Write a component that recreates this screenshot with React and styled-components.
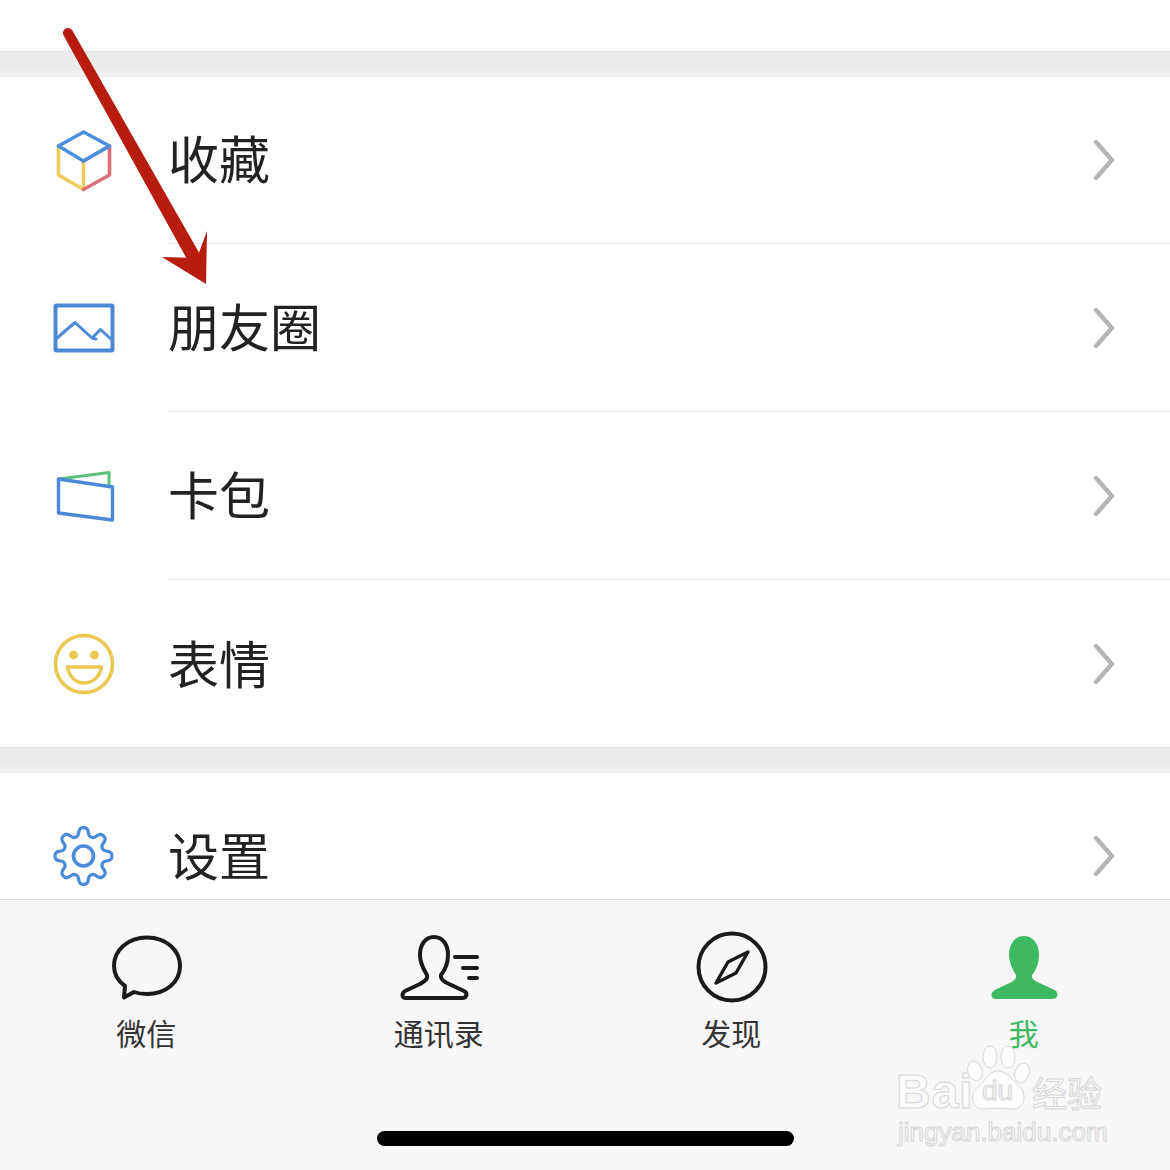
import React from "react";
import styled, { createGlobalStyle } from "styled-components";

const GlobalStyle = createGlobalStyle`
  html, body {
    margin: 0;
    padding: 0;
    background: #fff;
  }
  * {
    box-sizing: border-box;
  }
`;

const Page = styled.div`
  position: relative;
  width: 1170px;
  height: 1170px;
  display: flex;
  flex-direction: column;
  overflow: hidden;
  background: #fff;
  font-family: "Noto Sans CJK SC", "Liberation Sans", sans-serif;
`;

const Scroller = styled.div`
  flex: 1;
  min-height: 0;
  overflow: hidden;
  padding-top: 51px;
`;

const Gap = styled.div`
  height: 26px;
  margin-top: ${({ $pull }) => ($pull ? "-1px" : "0")};
  margin-bottom: -1px;
  background: linear-gradient(#ececec 0 78%, #f1f1f1 78%);
  border-top: 1px solid #dedede;
`;

const Row = styled.div`
  height: 168px;
  display: flex;
  align-items: center;
  padding-left: 52px;
`;

const RowIcon = styled.svg`
  width: 64px;
  height: 64px;
  flex: none;
  margin-right: 52px;
  fill: none;
  stroke-width: 3.6;
  stroke-linecap: round;
  stroke-linejoin: round;
`;

const RowBody = styled.div`
  flex: 1;
  height: 100%;
  display: flex;
  align-items: center;
  justify-content: space-between;
  padding-right: 54px;
  border-bottom: ${({ $last }) => ($last ? "none" : "1px solid #e8e8e8")};
`;

const RowLabel = styled.span`
  font-size: 51px;
  line-height: 1;
  color: #222;
  margin-top: -4px;
`;

const Chevron = styled.svg`
  width: 24px;
  height: 40px;
  fill: none;
  stroke: #b3b3b3;
  stroke-width: 4.4;
  stroke-linecap: round;
  stroke-linejoin: round;
`;

const TabBar = styled.div`
  height: 271px;
  flex: none;
  display: flex;
  flex-direction: column;
  align-items: center;
  background: #f7f7f7;
  border-top: 1px solid #dcdcdc;
`;

const Tabs = styled.div`
  width: 100%;
  display: grid;
  grid-template-columns: repeat(4, 1fr);
  padding-top: 30px;
`;

const Tab = styled.div`
  display: flex;
  flex-direction: column;
  align-items: center;
  color: ${({ $active }) => ($active ? "#3fb862" : "#333")};
`;

const TabIcon = styled.svg`
  width: 84px;
  height: 76px;
  fill: none;
  stroke: #1a1a1a;
  stroke-width: 4;
  stroke-linecap: round;
  stroke-linejoin: round;
`;

const TabLabel = styled.span`
  font-size: 30px;
  line-height: 36px;
  margin-top: 8px;
`;

const HomeBar = styled.div`
  width: 417px;
  height: 15px;
  margin-top: 81px;
  border-radius: 8px;
  background: #000;
`;

const ArrowLayer = styled.svg`
  position: absolute;
  left: 0;
  top: 0;
  width: 1170px;
  height: 320px;
  pointer-events: none;
`;

const Watermark = styled.div`
  position: absolute;
  left: 896px;
  top: 1043px;
  width: 214px;
  display: flex;
  flex-direction: column;
  color: #fbfbfb;
  -webkit-text-stroke: 1px #d6d6d6;
`;

const MarkTop = styled.div`
  height: 70px;
  display: flex;
  align-items: flex-end;
`;

const MarkBai = styled.span`
  font-family: "Liberation Sans", sans-serif;
  font-weight: 700;
  font-size: 48px;
  line-height: 56px;
  letter-spacing: 1px;
  width: 72px;
  margin-bottom: -7px;
`;

const Paw = styled.div`
  position: relative;
  width: 64px;
  height: 70px;
  flex: none;
  margin-left: -2px;
  margin-right: 2px;
`;

const PawShape = styled.svg`
  width: 64px;
  height: 70px;
  fill: #fdfdfd;
  stroke: #d8d8d8;
  stroke-width: 1;
`;

const PawText = styled.span`
  position: absolute;
  left: 16px;
  bottom: 6px;
  font-family: "Liberation Sans", sans-serif;
  font-size: 28px;
  line-height: 32px;
  color: #f4f4f4;
`;

const MarkCn = styled.span`
  font-size: 35px;
  line-height: 46px;
  white-space: nowrap;
  margin-bottom: -2px;
`;

const MarkUrl = styled.span`
  font-family: "Liberation Sans", sans-serif;
  font-size: 26px;
  line-height: 30px;
  margin-top: 4px;
  margin-left: 2px;
  white-space: nowrap;
`;

// wavy gear outline, lobes flattened a little so they read as teeth
const gearPath = () => {
  const cx = 83.5;
  const cy = 856;
  const pts = [];
  for (let i = 0; i < 200; i++) {
    const a = (i / 200) * Math.PI * 2;
    const wave = Math.tanh(1.6 * Math.cos(8 * (a + Math.PI / 2))) / Math.tanh(1.6);
    const r = 24.4 + 4 * wave;
    pts.push(`${(cx + r * Math.cos(a)).toFixed(2)} ${(cy + r * Math.sin(a)).toFixed(2)}`);
  }
  return "M" + pts.join(" L") + " Z";
};

const CubeIcon = () => (
  <RowIcon viewBox="52 128 64 64">
    <path d="M58.5 146 V175 L83.5 189.5 V161" stroke="#eecb5c" />
    <path d="M83.5 189.5 L109.5 175 V146 L83.5 161" stroke="#dc6f7c" />
    <path d="M58.5 146 L83.5 132 L109.5 146 L83.5 161 Z" stroke="#4a90dc" />
  </RowIcon>
);

const MomentsIcon = () => (
  <RowIcon viewBox="52 296 64 64" stroke="#4a8ad8">
    <rect x="55.5" y="305.5" width="57" height="45" rx="1" strokeWidth="4" />
    <path d="M57 338 L75 322.5 L92 338 L96 339 M92 338 L100.5 329.5 L112 340" strokeWidth="3" />
  </RowIcon>
);

const WalletIcon = () => (
  <RowIcon viewBox="52 464 64 64">
    <path d="M59 479 L109 472.5 V485" stroke="#5cc07c" strokeWidth="3" />
    <path d="M58.5 479 L112.5 487 V520 L58.5 513 Z" stroke="#4a8ad8" strokeWidth="3.4" />
  </RowIcon>
);

const SmileIcon = () => (
  <RowIcon viewBox="52 632 64 64" stroke="#eac74f">
    <circle cx="84" cy="664" r="28.5" />
    <circle cx="73.5" cy="655" r="4.4" fill="#eac74f" stroke="none" />
    <circle cx="94.5" cy="655" r="4.4" fill="#eac74f" stroke="none" />
    <path d="M67.5 667 H101.5 C100 677 92 683 84 683 C76 683 69 677 67.5 667 Z" strokeWidth="3.4" />
  </RowIcon>
);

const GearIcon = () => (
  <RowIcon viewBox="52 824 64 64" stroke="#4a8ad8">
    <path d={gearPath()} strokeWidth="3.2" />
    <circle cx="83.5" cy="856" r="10" />
  </RowIcon>
);

const rows = [
  { label: "收藏", icon: <CubeIcon /> },
  { label: "朋友圈", icon: <MomentsIcon /> },
  { label: "卡包", icon: <WalletIcon /> },
  { label: "表情", icon: <SmileIcon />, last: true },
];

const ListRow = ({ label, icon, last }) => (
  <Row>
    {icon}
    <RowBody $last={last}>
      <RowLabel>{label}</RowLabel>
      <Chevron viewBox="0 0 24 40">
        <path d="M4 2 L20 20 L4 38" />
      </Chevron>
    </RowBody>
  </Row>
);

const PERSON =
  "M434 937 C425 937 420 945 420 955 C420 964 424 970 427 975 C428 979 425 981 420 984 L405 991 C401 994 402 998 406 998 L462 998 C467 998 468 993 464 991 L447 983 C443 981 440 979 441 975 C445 970 448 964 448 955 C448 945 443 937 434 937 Z";

const App = () => (
  <Page>
    <GlobalStyle />
    <Scroller>
      <Gap />
      {rows.map((row) => (
        <ListRow key={row.label} {...row} />
      ))}
      <Gap $pull />
      <ListRow label="设置" icon={<GearIcon />} last />
    </Scroller>

    <TabBar>
      <Tabs>
        <Tab>
          <TabIcon viewBox="104 930 84 76">
            <path d="M147 937.5 C166 937.5 180 950 180 966 C180 982 166 994 147 994 C142 994 138 993.5 134 992 L124 997.5 L125 986 C118 981 114 974 114 966 C114 950 128 937.5 147 937.5 Z" />
          </TabIcon>
          <TabLabel>微信</TabLabel>
        </Tab>
        <Tab>
          <TabIcon viewBox="397 930 84 76">
            <path d={PERSON} />
            <path d="M455 957 H477 M463 968 H477 M469 978 H477" />
          </TabIcon>
          <TabLabel>通讯录</TabLabel>
        </Tab>
        <Tab>
          <TabIcon viewBox="689 930 84 76">
            <circle cx="732" cy="967" r="33.5" />
            <path d="M748 952 L736 973 L716 983 L728 962 Z" strokeWidth="3.4" />
          </TabIcon>
          <TabLabel>发现</TabLabel>
        </Tab>
        <Tab $active>
          <TabIcon viewBox="982 930 84 76">
            <path
              transform="translate(590 0)"
              d={PERSON}
              fill="#3fb862"
              stroke="#3fb862"
              strokeWidth="2"
            />
          </TabIcon>
          <TabLabel>我</TabLabel>
        </Tab>
      </Tabs>
      <HomeBar />
    </TabBar>

    <ArrowLayer viewBox="0 0 1170 320">
      <path d="M72.4 30.6 L203 259.6 L191 266.4 L63.6 35.4 A5 5 0 0 1 72.4 30.6 Z" fill="#b71c0e" />
      <path d="M206 284 L207 231 L197 258 L162 257 Z" fill="#b71c0e" />
    </ArrowLayer>

    <Watermark>
      <MarkTop>
        <MarkBai>Bai</MarkBai>
        <Paw>
          <PawShape viewBox="0 0 64 70">
            <ellipse cx="9" cy="28" rx="7" ry="10" transform="rotate(-20 9 28)" />
            <ellipse cx="24" cy="14" rx="7" ry="11" />
            <ellipse cx="42" cy="14" rx="7" ry="11" />
            <ellipse cx="56" cy="30" rx="7" ry="10" transform="rotate(20 56 30)" />
            <path d="M32 28 C42 28 46 38 54 44 C62 52 58 68 44 66 C36 65 28 65 20 66 C6 68 2 52 12 44 C20 38 22 28 32 28 Z" />
          </PawShape>
          <PawText>du</PawText>
        </Paw>
        <MarkCn>经验</MarkCn>
      </MarkTop>
      <MarkUrl>jingyan.baidu.com</MarkUrl>
    </Watermark>
  </Page>
);

export default App;
